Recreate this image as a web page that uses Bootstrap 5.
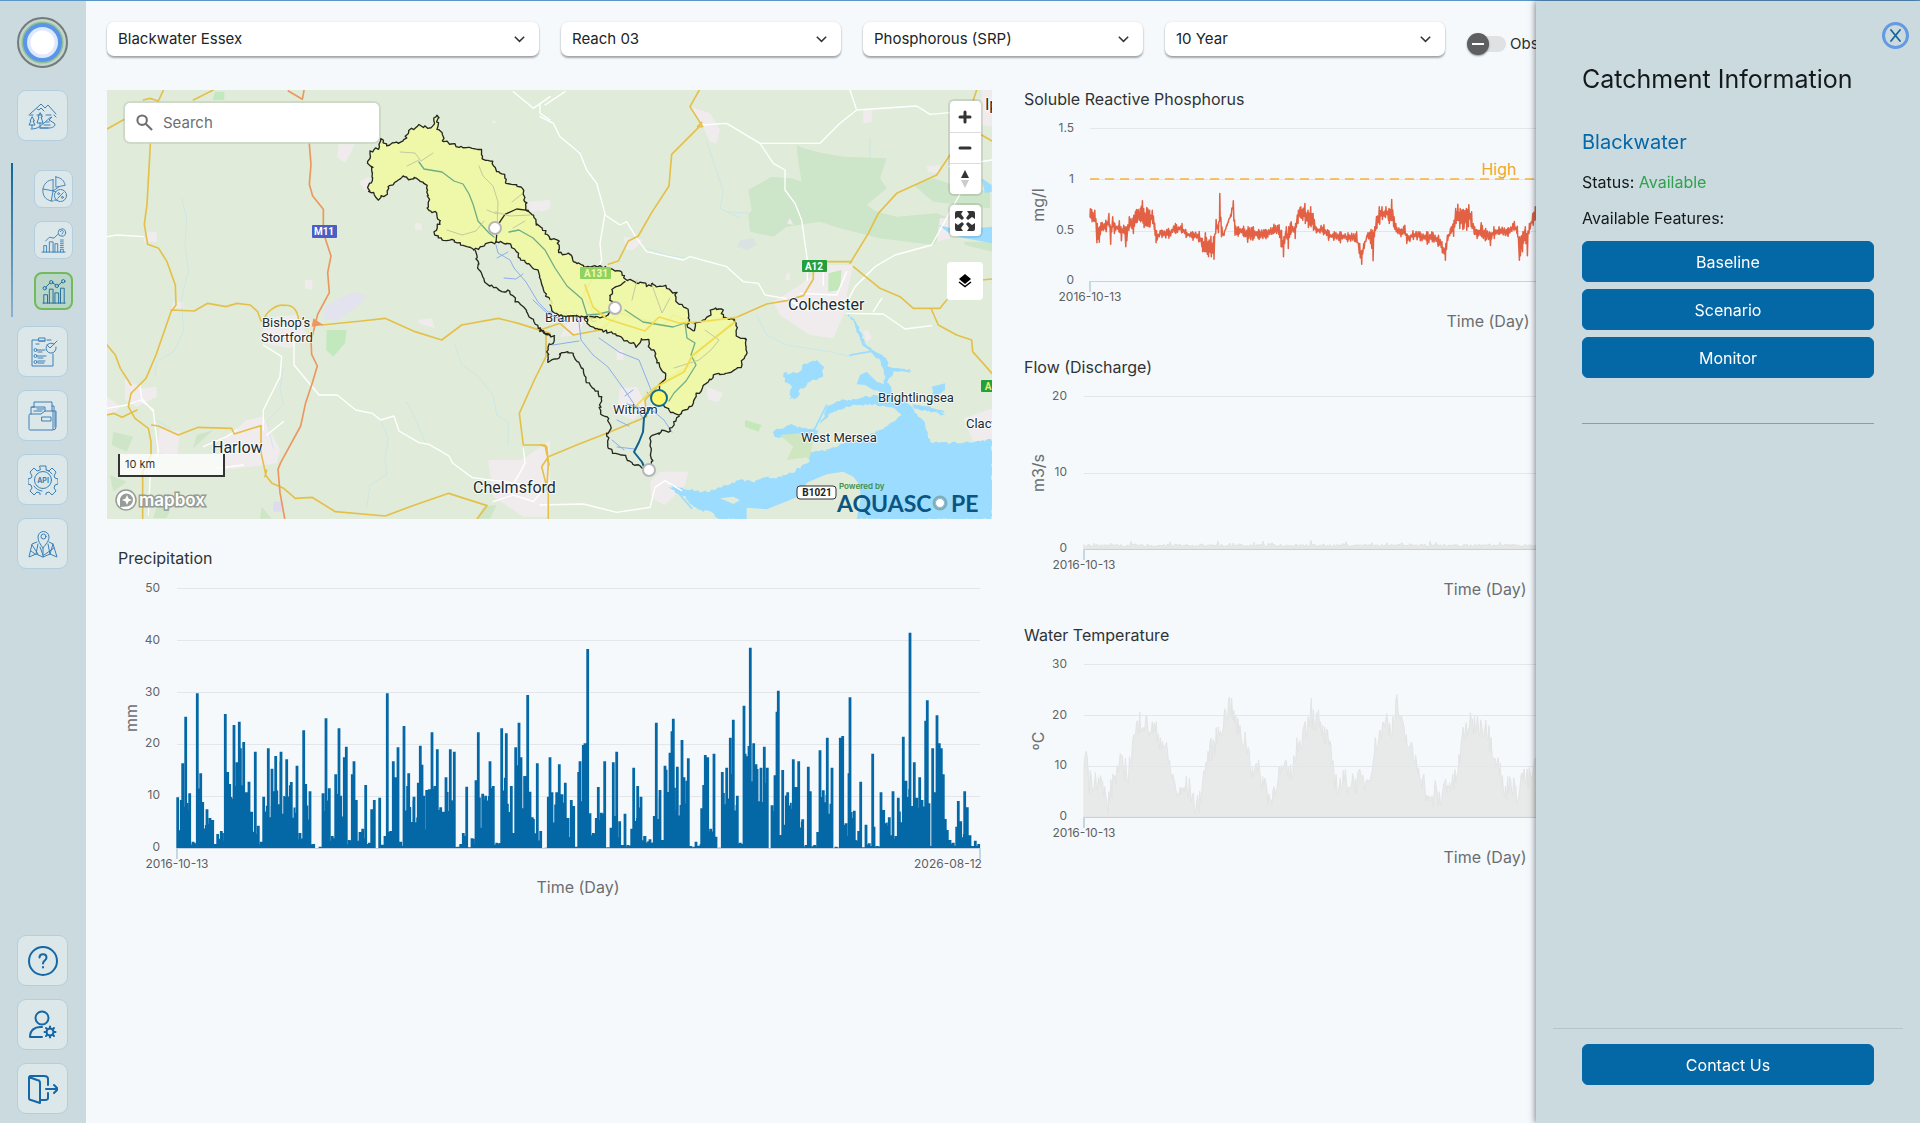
<!DOCTYPE html>
<html lang="en">
<head>
<meta charset="utf-8">
<meta name="viewport" content="width=device-width, initial-scale=1">
<title>Aquascope – Catchment dashboard</title>
<link href="https://cdn.jsdelivr.net/npm/bootstrap@5.3.0/dist/css/bootstrap.min.css" rel="stylesheet">
<style>
:root{--ink:#2b2e30;--brand:#0568a6;--panel:#cbdadf;--page:#f5f9fc;--tile:#dce7ea}
body{font-family:Inter,"Open Sans",sans-serif;font-size:15px;background:var(--page);color:var(--ink);border-top:1px solid #5b96c6}
.shell{min-height:calc(100vh - 1px)}
.side-nav{width:86px;flex:none;background:var(--panel);padding:16px 1px 9px 0}
.brand-mark{width:51px;height:51px;margin-bottom:22px}
.tile{width:51px;height:51px;background:var(--tile);border:1px solid #b3cee1;border-radius:9px;color:#3c7fb4;padding:0;display:flex;align-items:center;justify-content:center}
.tile svg{width:30px;height:30px;fill:none;stroke:currentColor;stroke-width:1;stroke-linejoin:round;stroke-linecap:round}
.tile-strong{color:#1667a5}
.tile-strong svg{stroke-width:2}
.sub-nav{position:relative;width:100%;padding:7px 12px 7px 34px;margin:22px 0 9px;gap:13px}
.sub-nav::before{content:"";position:absolute;left:11px;top:0;bottom:0;width:2px;background:linear-gradient(#0f6695,#8db2cb)}
.sub-nav .tile{width:39px;height:38px;border-radius:8px}
.sub-nav .tile svg{width:26px;height:26px}
.sub-nav .tile.active{background:#b9d6c9;border:2px solid #73b95f;color:#1c6a9c}
.nav-stack{gap:13px}
.workspace{min-width:0;overflow:hidden;padding:21px 11px 20px 21px}
.filters{gap:22px;margin-bottom:33px}
.filters .form-select{height:34px;margin-bottom:1px;border:0;border-radius:7px;padding:0 36px 0 11px;font-size:15px;color:#202426;box-shadow:0 2px 2px rgba(40,50,60,.4),0 0 2px rgba(40,50,60,.12);background-color:#fff;background-image:url("data:image/svg+xml,%3Csvg xmlns='http://www.w3.org/2000/svg' viewBox='0 0 16 16'%3E%3Cpath fill='none' stroke='%23333' stroke-width='1.6' d='M3 5l5 5 5-5'/%3E%3C/svg%3E");background-size:15px 15px;background-position:right 12px center;flex:none}
.filters .pick-short{width:280px}
.filters .pick-long{width:432px}
.observed{gap:4px;padding-top:9px}
.observed input{appearance:none;position:relative;width:39px;height:22px;margin:0;flex:none}
.observed input::before{content:"";position:absolute;left:10px;top:3px;width:29px;height:16px;border-radius:8px;background:#dfe1e2}
.observed input::after{content:"";position:absolute;left:0;top:0;width:22px;height:22px;border-radius:50%;background:linear-gradient(#fff,#fff) center/12px 2px no-repeat #5d5f60;box-shadow:0 1px 2px rgba(0,0,0,.4)}
.boards{gap:32px}
.boards>*{flex:1 1 0;min-width:0}
.chart-title{font-size:16px;line-height:18px;padding-bottom:2px;font-weight:400;margin:0;color:#303335}
.rain-title{margin:30px 0 0 11px}
.map-box{position:relative;overflow:hidden}
.map-box>svg,.plot{display:block;width:100%;height:auto}
.map-search{position:absolute;left:18px;top:13px;width:254px;height:39px;background:#fff;border-radius:5px;box-shadow:0 0 0 2px rgba(0,0,0,.08);padding:0 11px;gap:8px}
.map-search svg{width:17px;height:17px;flex:none}
.map-search input{border:0;outline:0;width:100%;font-size:15px;line-height:20px;background:none}
.map-search input::placeholder{color:#6b6f72;opacity:1}
.map-tools{position:absolute;right:9px;top:11px;gap:11px}
.tool-set{background:#fff;border-radius:4px;box-shadow:0 0 0 2px rgba(0,0,0,.1);overflow:hidden}
.tool-set button{display:block;width:31px;height:31px;border:0;background:none;padding:0}
.tool-set button+button{border-top:1px solid #ddd}
.tool-set svg,.layers svg{display:block;margin:auto}
.layers{width:36px;height:38px;border:0;border-radius:4px;background:#fff;margin-top:15px;padding:0}
.town{font-family:Roboto,sans-serif;fill:#222b2f;stroke:#fff;stroke-width:2;stroke-opacity:.8;paint-order:stroke;stroke-linejoin:round}
.town-lg{font-size:16px}.town-sm{font-size:13px}
.shield{font-family:Roboto,sans-serif;font-size:10px;font-weight:700;text-anchor:middle}
.road-y{stroke:#e4c04a;stroke-width:5}.road-w{stroke:#fff;stroke-width:4}.road-o{stroke:#eb9860;stroke-width:5}
.axis-num{font-size:12px;fill:#626567;text-anchor:end}
.axis-date{font-size:12px;fill:#5c6062;text-anchor:middle}
.axis-name{font-size:16px;fill:#6b6e70;text-anchor:middle}
.grid-line{stroke:#e4e7e9;fill:none}
.base-line{stroke:#c5d2e4;fill:none}
.tick-end{stroke:#c5d7e0;stroke-width:2;fill:none}
.info-panel.offcanvas{--bs-offcanvas-width:384px;top:1px;background:var(--panel);border:0;box-shadow:-1px 0 6px rgba(30,40,50,.55);color:#14191c}
.panel-main{padding:63px 46px 0}
.panel-title{font-size:25px;line-height:30px;font-weight:400;margin:0 0 35px}
.panel-name{font-size:20px;line-height:26px;font-weight:400;color:var(--brand);margin:0 0 17px}
.panel-text{font-size:16px;line-height:20px;margin:0 0 16px}
.ok-word{color:#2fa24c}
.feature-list{gap:7px;padding-top:13px}
.btn-brand{--bs-btn-bg:#0568a6;--bs-btn-color:#fff;--bs-btn-border-color:#0568a6;--bs-btn-hover-bg:#04588d;--bs-btn-hover-color:#fff;height:41px;font-size:16px;font-weight:400;padding:0;border-radius:6px;width:100%}
.panel-rule{margin:45px 0 0;border-top:1px solid #7f8e94;opacity:.8}
.panel-foot{margin:0 17px;padding:15px 29px 38px;border-top:1px solid #b5c4ca}
.close-ring{position:absolute;top:21px;right:11px;width:27px;height:27px;border:3px solid #6599e2;border-radius:50%;background:none;padding:0;display:flex;align-items:center;justify-content:center}
</style>
</head>
<body>
<div class="shell d-flex">
<nav class="side-nav d-flex flex-column align-items-center" aria-label="Main">
  <svg class="brand-mark" viewBox="0 0 51 51" aria-hidden="true"><circle cx="25.500" cy="25.500" r="24.500" fill="#c3d6cb" stroke="#737b7d" stroke-width="2"/><circle cx="25.500" cy="25.500" r="21" fill="#91bf98"/><circle cx="25.500" cy="25.500" r="19.500" fill="#5b95e8"/><circle cx="25.500" cy="25.500" r="15.500" fill="#dfe9fc"/><circle cx="25.500" cy="25.500" r="12" fill="#fff"/></svg>
  <button class="tile" type="button" aria-label="Catchment"><svg viewBox="0 0 30 30"><path d="M2 13L13 3l4 4 3-3 8 9M1 14h4m4 0h5m4 0h5M9 8l2 1 2-2 3 3M4 24v3M12 22v5M4 16l-2 4h1l-2 4h6l-2-4h1zM12 12l-2 4h1l-2 6h6l-2-6h1zM3 28c8 0 10-4 13-6s4-5 8-6l-3 3 5 3c3 3-2 5-5 5h-8M18 21h3M16 24h6M26 14l2 2M12 27h8"/></svg></button>
  <div class="sub-nav d-flex flex-column">
    <button class="tile" type="button" aria-label="Baseline"><svg viewBox="0 0 28 28"><path d="M13 4v12L2 14M13 4C7 4 2 9 2 16s5 11 11 11M13 16l-2 11M13 16l6-4M16 1v11l10-2c-1-5-4-8-10-9zM14 26h4M13 16l3 1"/><circle cx="21" cy="21" r="6.500"/><path d="M18 24l6-6"/><circle cx="19" cy="19" r="1"/><circle cx="23" cy="23" r="1"/></svg></button>
    <button class="tile" type="button" aria-label="Scenario"><svg viewBox="0 0 28 28"><path d="M1 27h25M3 27v-7h3v7M9 27V16h4v11M15 27v-9h3v9M21 27v-3h3v3M21 22h3M21 20h3M21 18h3M21 16h3M21 14h3M5 15l4-4 5 1 4-4"/><circle cx="22.500" cy="6" r="4"/><path d="M21 5c0-2 3-2 3 0 0 1-1 1-1 2M22.500 8.500v0"/></svg></button>
    <button class="tile active" type="button" aria-label="Monitor"><svg viewBox="0 0 28 28"><path d="M2 27h24M3 27V18h4v9M9 27V12h4v15M15 27V16h4v11M21 27V11h4v16M5.500 9.500l4-4M12 5l4 2.500M18.500 8l4-3.500"/><circle cx="4" cy="11" r="1.800"/><circle cx="11" cy="4.500" r="1.800"/><circle cx="17" cy="8.500" r="1.800"/><circle cx="24" cy="3.500" r="1.800"/></svg></button>
  </div>
  <div class="nav-stack d-flex flex-column">
    <button class="tile" type="button" aria-label="Tasks"><svg viewBox="0 0 30 30"><path d="M10 3H4v26h21V17M19 3h4M11 1h6v3h-6zM11 4h6M8 7h3M10 13h7M10 15h4M10 19h8M10 21h5M10 24h7M10 26h6M26 7a5 5 0 1 0 2 3M19 8l3 3 7-7"/><circle cx="7.500" cy="13" r="1.500"/><circle cx="7.500" cy="19" r="1.500"/><circle cx="7.500" cy="25" r="1.500"/></svg></button>
    <button class="tile" type="button" aria-label="Files"><svg viewBox="0 0 30 30"><path d="M1 14q0-1 1-1h11l4-3h8v18q0 1-1 1H2q-1 0-1-1zM3 13V6h3M6 6V1h18v9M4 6h13v4M9 8h7M6 10h8M24 5h2v5M25 10h3v16q0 3-3 3M27 11v15M14 16h9v4h-9z"/></svg></button>
    <button class="tile" type="button" aria-label="API"><svg viewBox="0 0 30 30"><path d="M12 1h6v4l3 1 3-3 4 4-2 4 1 2 3 1v5l-3 1-1 3 2 3-4 4-3-3-3 1v3h-6v-3l-3-1-3 3-4-4 2-3-1-3-3-1v-5l3-1 1-2-2-4 4-4 3 3 3-1z"/><circle cx="15" cy="15" r="8.500"/><path d="M6 21a11 11 0 0 0 8 5M24 9a11 11 0 0 0-5-4"/><text x="15" y="18" font-size="7" font-weight="700" text-anchor="middle" fill="#3c7fb4" stroke="none">API</text></svg></button>
    <button class="tile" type="button" aria-label="Map"><svg viewBox="0 0 30 30"><path d="M15 19c-3-4-5-7-5-11a5.500 5.500 0 0 1 11 0c0 4-3 7-6 11zM9 13l-5 2-3 13 7-3 7 3 7-3 7 3-4-13-4-2M8 25l2-10M22 25l-2-10M15 28v-8M4 16l6 9M3 22l4 3M25 15l-3 10M16 26l10-7M12 18l3 8"/><circle cx="15.500" cy="7.500" r="2.500"/></svg></button>
  </div>
  <div class="nav-stack d-flex flex-column mt-auto">
    <button class="tile tile-strong" type="button" aria-label="Help"><svg viewBox="0 0 30 30"><circle cx="15" cy="15" r="14"/><path d="M11.500 11.500c0-4.500 7-4.500 7 0 0 3-3.500 3-3.500 6M15 21v.5"/></svg></button>
    <button class="tile tile-strong" type="button" aria-label="Account settings"><svg viewBox="0 0 30 30"><circle cx="14" cy="8" r="6.500"/><path d="M14 27H2c0-7 5-10 10-10h2"/><circle cx="22" cy="22" r="3.500"/><path d="M22 16.500v2M22 25.500v2M16.500 22h2M25.500 22h2M18 18l1.500 1.500M24.500 24.500L26 26M18 26l1.500-1.500M24.500 19.500L26 18"/></svg></button>
    <button class="tile tile-strong" type="button" aria-label="Log out"><svg viewBox="0 0 30 30"><path d="M1 3l8 3c2 0 3 1 3 3v20l-9-3c-1 0-2-1-2-2zM2 2h14c3 0 4 1 4 3v6M20 19v5c0 2-1 2-3 2h-5M18 15h12M26 11l4 4-4 4"/></svg></button>
  </div>
</nav>

<main class="workspace flex-grow-1">
  <form class="filters d-flex">
    <select class="form-select pick-long" aria-label="Catchment"><option>Blackwater Essex</option></select>
    <select class="form-select pick-short" aria-label="Reach"><option>Reach 03</option></select>
    <select class="form-select pick-short" aria-label="Parameter"><option>Phosphorous (SRP)</option></select>
    <select class="form-select pick-short" aria-label="Period"><option>10 Year</option></select>
    <label class="observed d-flex align-items-center"><input type="checkbox" role="switch">Observed</label>
  </form>

  <div class="boards d-flex">
    <section>
      <div class="map-box">
        <svg viewBox="0 0 885 429" role="img" aria-label="Map of the Blackwater catchment">
          <rect width="885" height="429" fill="#e0ecd9"/>
          <g stroke-linejoin="round" stroke-linecap="round">
          <!-- western sheet: towns, woods, roads -->
          <g transform="scale(.333333) translate(-21 -15)" fill="none">
            <g fill="#f0ecee"><path d="M715 178h50l-30 55-22-15zM778 290l30-15v35l-15 5zM140 440h30v30h-40zM220 650h30v20h-35zM615 585h22v30l-22-5zM955 705l40-5 10 30-50-15zM1280 350l70-5v25l-60 10zM490 700l100-10 30 60-50 40-80-15zM75 880l50 30 45-5v30l-60 30-35-20zM180 1030l60 10-10 80-60-20zM440 1005l50-10 50 100-10 40-160 20-10-80zM21 935l40 30-20 20h-20zM1165 1125h100l85-60v230h-80l-90-60zM945 415h20v20h-20zM1175 105l15 5-10 8z"/></g>
            <path d="M670 665l90-45 38 10-15 25-70 52-40-3z" fill="#e3e3ef"/>
            <path d="M680 735h60l-5 40-35 40-22-20zM345 20h28v25h-35z" fill="#c2e9bd"/>
            <path d="M1150 1265l40-5-20 41h-40zM40 1040l60 15-20 45-45-20zM180 1230l40 20-20 50h-40zM290 1050l50-15-60 55zM30 1170l50 20-40 30zM485 1265l30 36h-35z" fill="#cfe5c8"/>
            <path d="M520 1250h30v30h-30z" fill="#dcdcee"/>
            <g stroke="#c3e4ea" stroke-width="2"><path d="M245 340l15 60-5 80 10 80-20 80 5 100-30 60-50 30-5 40M840 1000l25 60-10 60 5 50-50 30-10 70M920 950l25 50 30 70M1065 780l20 60 45 30 50 60 10 60 35 20v70M160 1000l50 30M550 850l-10 60 10 50-50 50 20 80"/></g>
            <path class="road-w" d="M21 455l30-5 80 5M490 780l55 35-5 60-50 100v60M582 770v70l75 90h55l55 45 50 10 25 20 40-12 15 45 60 35 30 5 60 35 10 20 60 45 150 20M120 900l5 40 35 40 15 120-25 80-5 110M21 970l60-10 40-15 40 30M1240 20l60 50 50-35M1320 60v25l30 20M350 1150l80-10M500 1050l50-40M310 1085l70-30 30-20M1270 1090l5 45-50 90M1180 1250l60-20 60 20 50-60"/>
            <path class="road-y" d="M21 132l50-28M130 45l20-5 25 8 15-32M280 45l60-30M151 178l-10 180-8 60 10 60 33 12 25 40 25 70 2 60-15 20-45 130-30 70-45 45-8 40 20 35 40 30 8 40v40l-25 50v150l-15 31M21 990l20-5 25 12 45-22M213 675l70 3 40-23 55 10 33-10 40 5 22 20 10 28 10-2c0-25 40-50 60-45 30-3 40 20 43 45M665 720l120-12 70-8 90 40 80 25 60-45 110-20 60 15 95 30M21 780l25 30 15 40 32 50M155 1020l20 3 60 27 60-23 100 3 8 17 80-25v80l15 70 18 23 35 15 35 30 50-3 70 43 150 13 80-30 110-38 115 37-30 40M1338 755v60l-35 70-45 100 12 95 65 0 12 60M495 1175l5-20"/>
            <path class="road-o" d="M565 18l42 25 5-27M628 178l5 60-5 60 10 35 32 40v70l10 30 13 40-10 50 5 60-35 65-20 80 2 40 17 35-15 50-20 60-15 70-60 110-8 20 6 70 14 77"/>
            <path d="M640 700l30 20-35 5z" fill="#eb9860"/>
          </g>
          <!-- eastern sheet: forest, estuary, roads -->
          <g transform="scale(.333333) translate(1299 -15)" fill="none">
            <path d="M790 190l60 15 60 10 130 5-20 60 20 30-60 50 30 20 60 15 120-10 50 20-20 30-40 45-160-20-120-30-60-20-100 15-40 30-70-15-5-50 10-15-10-60 70-40 60 5 30 10-10-60-5-50zM1120 300l60-20 60 20 110 20v50l-170-20zM1270 470h86v30l-80-20z" fill="#cde5c8"/>
            <g fill="#f0ecee"><path d="M450 65l60 20 30 50-10 40-20-5-20-45zM970 75h25v35l-25 5zM0 350l35 5-15 20-20 5zM250 455l60 10-30 30h-20zM740 565h10v20h-15zM700 650l80-50 50-40 40-20h70l-20 90 10 30-20 30-30 70-70-10-90-60zM750 400l10 20-20-5zM500 905l50 20-15 25-30-5zM240 910l50-5 30 60-40 40-50-20zM90 700l40 5-10 45-60 5zM330 1190l30-30 85 0-10 40-60 60-40-20zM1325 15h30v110l-30-5zM1160 245l40-5-5 25-30-5zM1200 400h30v60l-40 10zM0 1100l20 10v110l-20-5zM1270 1000l90-30v90l-60 10zM970 740l15-5 10 25-15 10zM230 795h20v30h-20z"/></g>
            <path d="M865 565l40-10-5 60-35 5zM615 1005l50 15-10 20-40-15z" fill="#c5e8bb"/>
            <path d="M600 465l40-5 10 20-30 15-30-10z" fill="#d9e4e2"/>
            <g stroke="#bfe4ee" stroke-width="2"><path d="M500 170l30 90 20 60-10 50 60 30M560 380l70 5M650 690l30 60 60 30 130 20 60 15 40-15M990 160v60M320 490l60 20 60 10M100 190l20 10"/></g>
            <path class="ridge" fill="#9bdcff" d="M385 1205l65 7 50 10 60-22 40-15 40 5 50-15 20 5 50-20 50-32-20-23 70-10 100-35 90-40 35-30-35-25-50-5h-60l-70 25-15 45-20 5 25-65 30-20 70-12 55-8 15-30 5-20-10-50-35-30-25-30-20-50-25-30 6-4 29 39 25 60 55 30 15 35 65 5-55 5-15 30 15 40 50 30 70 10 35 20-100-20 35 40 20 60 60 5 126-10v238H540l-30-23-40-5-30-35z"/>
            <path class="ridge" fill="#9bdcff" d="M730 865l50-5 10-20 40-15 20 20v30l-40 15-30 25-10 25-20 5 5-45-20-10z"/>
            <path class="ridge" fill="#9bdcff" d="M700 1040l50-20 80 15 30 15-20 20-60-10-80-5z"/>
            <path fill="#9bdcff" d="M960 870l20-10 30 30 30 10-10 20-30-5-25-15-25-2zM1195 420l60 15 101-10v50l-80-15-40-10zM1325 280l30 20v20l-20 5zM1175 905l40-10v20l-20 15-25 35-10-5 20-40z"/>
            <path fill="#e0ecd9" d="M620 1303v-35l60 5 100-40 20-40 60-25 50-8 30 15 15 20 8 40-13 68zM845 1010l50-35 80-10 70 5 40 20-110 35-100 40-50-5zM540 1240l40-5 20 10-20 12z"/>
            <path fill="#cfe6c1" d="M720 1050l60-5 40 20-10 50-70 10 20-40z"/>
            <path stroke="#9bdcff" stroke-width="5" d="M945 710l25 70 60 40M860 960l-40 80M990 800l-60 10M1050 850l60 10M395 1200l60 70M1120 960l90 20"/>
            <path class="road-w" d="M0 95l40 20 20 40 60 50 20 50 30 40 25 90-15 90 5 50-20 50M195 390l45 30 20-10 30 50 30 40 110 25 20-10 110 30 50 45 45 5 20 35 60 10 70 35M15 60l60-40M485 120l75-5 100 60 40 60 35 20v60l30 40 20 50 17 120v60M660 175l180 0 60-60 50-40-20-60M950 75l180-12 40 25 60-5M1356 225l-130 20M1275 300l-100 180-110 30-60 35-60 60-30 60M920 685l110 2 65 45 80-10M780 625l110 5 30-70M1000 680l25-40M0 1260l130-3 100 25 100-15 15-60 30-20 50 30M850 540v60"/>
            <path class="road-y" d="M478 15l-28 50 38 60h-15l12-13M475 128l-80 80-8 95-52 80-40 70-30 15-30 60-30 10M135 545l20 40-25 40 30 60M0 735l60-20 40 35 80-15 60-50 130 35 30-30 60 25 80-10 50-8 90-40 60-10 50-15 30-50v-30M845 530h90M930 535l55-90 30-60 55-60 120-55 40-60M940 545l80 65 60 25 40 35h80l20-25M1175 675l20 45 55 30 45 15 3 35 58 65M1325 585l31-3M1325 150l31 18M1310 15l-10 30M585 705l-110 95-20 40-90 50-50 55 5 50-120 50-90 35-85 35-20 30 20 80v80M0 1080l20 5 5 50-5 80"/>
          </g>
          <text class="town town-sm" x="438" y="232">Braintree</text>
          <text class="town town-sm" x="506" y="324">Witham</text>
          <!-- catchment -->
          <g fill="none" stroke="#8caeea" stroke-width="1"><path d="M389 155l2 8 12 7 4 8 12 14 12 20 10 10M390 168l11-6M397 188l12 1 7-5M441 222h25l6 10 2 18 12 15 15 12 18 25 8 12 10 16M426 210l15 14 20 8M492 248l20 14 20 8 8 20 6 15M446 255l26-4M510 330l12 6M510 357l18 2M520 314l14 4M540 302l10 14M526 300l-8 6M545 320l12 10 8 12M505 350l12 10"/></g>
          <path class="ridge" transform="scale(.333333) translate(-21 -15)" fill="#f0f8a0" fill-opacity=".88" stroke="#25281f" stroke-width="4" d="M1350 462l-15-22-10-15-15-5-5-22-20-20-7-8 4-20-10-5v-27l-17-13-23-7-17-8v-20l-25-8-2-17-10-5-3-12-25-6-8-27-17-5-10 3-15-8-32 0-8-10-10 3-20-13v-17l-20-20 5-36-12 3-5 30-18 2-20-5-15 8-20 8-13 34-27 3-25 5-15-18-10 28-25 10-5 35 13 10-3 45-10 10 1 22 15 4 14 16 25-14 5-26 20-10 15-7 12-15 18 15 20-7 10 12 18 10 7 40v38l20 2 17 30-14 15-3 20 25 25 30-5 13 10 17 3 35 17 25-13 38-12 20 3 17 2 27 25 3 20 25 10 20 18 15 10 8 42 17 30 15 25"/>
          <g transform="scale(.333333) translate(1299 -15)" fill="none" stroke="#25281f" stroke-width="4">
            <path class="ridge" fill="#f0f8a0" fill-opacity=".88" d="M30 462l25 3v35l15 8 20 0 15 27 15 2 15 8 45-3 35 11 33 12 7 20 20-3 10 12 15-2 30 13 5-15 13 15 12 0 15-7 15 20 18 7 2 30 15 3 15 12 10 25-8 30 18 13 10-26 20-7 20-10 5-25h30l5 25 35 10 7 20v30l28 5-2 40-18 50-20 10-15 5-40 5-25 20-15 22-20 23-10 30-15 5-20 20-20-5-25-20-20-25v-30l20-25-3-25-10-10-12-20-5-30-15-10-5-28h-20l-13 23-20-13-17-4-30-23-45-10-20-7-15-8-5-28-35 3-45-3-20-12-10-20"/>
            <path class="ridge" d="M255 590l-35 20-10 30 12 28-17 22-20 8-35-3"/>
            <path class="ridge" d="M0 730l15 18 30 7-2 20-18 5-5 52 15-10 20 3 5-20 35-5 15 30 10 10 10 20 10 30 25 25 20 20-5 40 10 15 15 10 7 30-10 20 3 35 15 20 35 7 10 12 15 11 25 15 22 5 11-25-8-30 2-50 28-5 5-10 20 5 30-45"/>
          </g>
          <g transform="scale(.333333) translate(-21 -15)" fill="none" stroke="#25281f" stroke-width="4">
            <path d="M1190 430l10-20 15-22 35-16 35 4M1190 450l-2 22"/>
            <path class="ridge" d="M1125 495l5 25 10 20-8 2 18 33 5 15 10 10 15 5 15 10 20 5 15-5 5 15 15 20 10 5 25 35 15 15 20 30 30 17"/>
          </g>
          <g fill="none" stroke="#6fae84" stroke-width="1.300"><path d="M312 72l5 7 18 3 12 9 9 3 6 10 4 10 5 17 11 12 5 4M402 142l10-2 14 8 12 12 10 18 12 18 15 13 5 16 12-1 20-5M518 220l18 12 30 5 12-4 2 15 8 5-4 12 5 10-10 16-12 12-5 8"/></g>
          <g fill="none" stroke="#bfc3a0" stroke-width=".9"><path d="M293 62l15 1 6 8 12-8M300 76l12-6M372 76l4 10 10 10 5 16-1 28M388 122l15 4 20-1M380 120l10 4M340 140l15 5 14-4 8-10M405 112l10-8M406 138l12-7M530 190l-5 20M545 195l10 28 8-15M598 240l14 10-8 10-12 10-25 8"/></g>
          <g fill="none" stroke="#f0dc50" stroke-width="1.700"><path d="M478 195l8 22 14 12 38 12 14-14 20 6 28-2 30-4M628 232l-28 22-15 12-8 16-30 16-18 18"/></g>
          <path d="M543 318l-6 10-1 14-4 10-5 10 8 10 3 7" fill="none" stroke="#10628e" stroke-width="2"/>
          </g>
          <rect x="473" y="177" width="31" height="12" rx="1" fill="#8fd35f"/>
          <text class="shield" x="489" y="187" fill="#f3f9b0">A131</text>
          <g fill="#fff" stroke="#b4b5b8" stroke-width="2"><circle cx="388" cy="138" r="6"/><circle cx="508" cy="218" r="6"/><circle cx="542" cy="380" r="6"/></g>
          <circle cx="552" cy="308" r="8" fill="#fdf86e" stroke="#0f6d90" stroke-width="2"/>
          <!-- labels -->
          <g class="town town-sm"><text x="155" y="237">Bishop’s</text><text x="154" y="252">Stortford</text><text x="694" y="352">West Mersea</text><text x="771" y="312">Brightlingsea</text><text x="859" y="338">Clact</text></g>
          <g class="town town-lg"><text x="105" y="363">Harlow</text><text x="366" y="403">Chelmsford</text><text x="681" y="220">Colchester</text><text x="878" y="20">Ip</text></g>
          <rect x="205" y="135" width="25" height="13" rx="1" fill="#4a5ec4"/><text class="shield" x="217" y="145" fill="#fff">M11</text>
          <rect x="695" y="170" width="25" height="12" rx="1" fill="#239f3e"/><text class="shield" x="707" y="180" fill="#fff">A12</text>
          <rect x="874" y="290" width="25" height="12" rx="1" fill="#239f3e"/><text class="shield" x="881" y="300" fill="#e9f06c">A</text>
          <rect x="690" y="396" width="39" height="13" rx="3" fill="#fff" stroke="#333"/><text class="shield" x="710" y="406" fill="#222">B1021</text>
          <rect x="12" y="364" width="105" height="22" fill="#fff" fill-opacity=".75"/><path d="M12 364v22h105v-22" fill="none" stroke="#333" stroke-width="2"/><text x="18" y="378" font-size="11" fill="#333">10 km</text>
          <g stroke="#969c96" fill="#fff"><circle cx="19" cy="410" r="10" stroke-width="1.500"/><path d="M13 417V410a6.500 6.500 0 1 1 6.500 6.500z" fill="#969c96" stroke="none"/><path d="M20 405l1.500 3.500L25 410l-3.500 1.500L20 415l-1.500-3.500L15 410l3.500-1.500z" stroke="none"/><text x="32" y="416" font-size="17" font-weight="600" stroke-width="3" paint-order="stroke">mapbox</text></g>
          <text x="732" y="399" font-size="8" font-weight="600" fill="#3f8d49">Powered by</text>
          <g font-family="Lato, sans-serif" font-size="23" font-weight="700" fill="#0c5580"><text x="730" y="422">AQUASC</text><text x="844" y="422">PE</text></g>
          <circle cx="833" cy="413" r="6" fill="#fff" stroke="#7fb1b4" stroke-width="3"/><circle cx="833" cy="413" r="4.500" fill="#fff" stroke="#8fb4f0"/>
        </svg>
        <label class="map-search d-flex align-items-center"><svg viewBox="0 0 18 18" fill="none" stroke="#6d6f71" stroke-width="2.200" aria-hidden="true"><circle cx="6.500" cy="6.500" r="5"/><path d="M10 10l7 7"/></svg><input type="text" placeholder="Search" aria-label="Search"></label>
        <div class="map-tools d-flex flex-column align-items-center">
          <div class="tool-set">
            <button type="button" aria-label="Zoom in"><svg width="14" height="14" stroke="#333" stroke-width="3" stroke-linecap="round"><path d="M2 7h10M7 2v10"/></svg></button>
            <button type="button" aria-label="Zoom out"><svg width="14" height="14" stroke="#333" stroke-width="3" stroke-linecap="round"><path d="M2 7h10"/></svg></button>
            <button type="button" aria-label="Reset north"><svg width="10" height="20"><path d="M1 9h8L5 1z" fill="#333"/><path d="M1 11h8l-4 8z" fill="#ccc"/></svg></button>
          </div>
          <div class="tool-set"><button type="button" aria-label="Full screen"><svg width="22" height="22" viewBox="0 0 22 22" fill="#333"><path id="fsArrow" d="M1 9V3q0-2 2-2h6L7 4l3 4-2 2-4-3z"/><use href="#fsArrow" transform="rotate(90 11 11)"/><use href="#fsArrow" transform="rotate(180 11 11)"/><use href="#fsArrow" transform="rotate(270 11 11)"/></svg></button></div>
          <button class="layers" type="button" aria-label="Layers"><svg width="14" height="14" viewBox="0 0 14 14"><path d="M7 0l6 5-6 5-6-5z"/><path d="M1 8l6 4.500L13 8" fill="none" stroke="#000" stroke-width="1.500"/></svg></button>
        </div>
      </div>
      <h2 class="chart-title rain-title">Precipitation</h2>
      <svg class="plot" viewBox="0 0 885 330" role="img" aria-label="Precipitation chart">
        <path class="grid-line" d="M70 19.500H873M70 71.500H873M70 123.500H873M70 175.500H873M70 227.500H873"/>
        <path id="rain" fill="#0568a6"/>
        <path class="base-line" d="M70 279.500H873"/><path class="tick-end" d="M70 279v11M873 279v11"/>
        <g class="axis-num"><text x="53" y="23">50</text><text x="53" y="75">40</text><text x="53" y="127">30</text><text x="53" y="178">20</text><text x="53" y="230">10</text><text x="53" y="282">0</text></g>
        <g class="axis-date"><text x="70" y="299">2016-10-13</text><text x="841" y="299">2026-08-12</text></g>
        <text class="axis-name" x="471" y="324">Time (Day)</text>
        <text class="axis-name" transform="translate(30 149) rotate(-90)">mm</text>
      </svg>
    </section>

    <section>
      <h2 class="chart-title">Soluble Reactive Phosphorus</h2>
      <svg class="plot" viewBox="0 0 885 248" role="img" aria-label="Soluble reactive phosphorus chart">
        <path class="grid-line" d="M66 18.500H864M66 69.500H864M66 121.500H864"/>
        <path class="base-line" d="M66 171.500H864"/><path class="tick-end" d="M66 171v11"/>
        <path d="M66 69H864" fill="none" stroke="#f3b23f" stroke-width="1.500" stroke-dasharray="9 6"/>
        <path id="srp" fill="none" stroke="#e26144" stroke-width="1.500" stroke-linejoin="round"/>
        <g class="axis-num"><text x="50" y="22">1.5</text><text x="50" y="73">1</text><text x="50" y="124">0.5</text><text x="50" y="174">0</text></g>
        <text class="axis-date" x="66" y="191">2016-10-13</text>
        <text class="axis-name" x="464" y="217">Time (Day)</text>
        <text class="axis-name" transform="translate(20 95) rotate(-90)">mg/l</text>
        <text x="475" y="65" font-size="16" text-anchor="middle" fill="#f0a62d">High</text>
      </svg>
      <h2 class="chart-title">Flow (Discharge)</h2>
      <svg class="plot" viewBox="0 0 885 248" role="img" aria-label="Flow chart">
        <path class="grid-line" d="M60 18.500H862M60 95.500H862"/>
        <path id="flow" fill="#e6e8e8" stroke="#e2e3e3"/>
        <path class="base-line" d="M60 171.500H862"/><path class="tick-end" d="M60 171v11"/>
        <g class="axis-num"><text x="43" y="22">20</text><text x="43" y="98">10</text><text x="43" y="174">0</text></g>
        <text class="axis-date" x="60" y="191">2016-10-13</text>
        <text class="axis-name" x="461" y="217">Time (Day)</text>
        <text class="axis-name" transform="translate(20 95) rotate(-90)">m3/s</text>
      </svg>
      <h2 class="chart-title">Water Temperature</h2>
      <svg class="plot" viewBox="0 0 885 248" role="img" aria-label="Water temperature chart">
        <path id="temp" fill="#e8eae9" stroke="#e3e4e4"/>
        <path class="grid-line" d="M60 18.500H862M60 69.500H862M60 120.500H862"/>
        <path class="base-line" d="M60 171.500H862"/><path class="tick-end" d="M60 171v11"/>
        <g class="axis-num"><text x="43" y="22">30</text><text x="43" y="73">20</text><text x="43" y="123">10</text><text x="43" y="174">0</text></g>
        <text class="axis-date" x="60" y="191">2016-10-13</text>
        <text class="axis-name" x="461" y="217">Time (Day)</text>
        <text class="axis-name" transform="translate(20 95) rotate(-90)">ºC</text>
      </svg>
    </section>
  </div>
</main>
</div>

<aside class="info-panel offcanvas offcanvas-end show" data-bs-backdrop="false" data-bs-scroll="true" tabindex="-1" aria-labelledby="panelTitle">
  <button class="close-ring" type="button" aria-label="Close"><svg width="13" height="13" stroke="#17659d" stroke-width="1.800" stroke-linecap="round"><path d="M2 1l9 11M11 1L2 12"/></svg></button>
  <div class="panel-main flex-grow-1">
    <h1 class="panel-title" id="panelTitle">Catchment Information</h1>
    <h2 class="panel-name">Blackwater</h2>
    <p class="panel-text">Status: <span class="ok-word">Available</span></p>
    <p class="panel-text mb-0">Available Features:</p>
    <div class="feature-list d-grid">
      <button class="btn btn-brand" type="button">Baseline</button>
      <button class="btn btn-brand" type="button">Scenario</button>
      <button class="btn btn-brand" type="button">Monitor</button>
    </div>
    <hr class="panel-rule">
  </div>
  <div class="panel-foot"><button class="btn btn-brand" type="button">Contact Us</button></div>
</aside>

<script src="https://cdn.jsdelivr.net/npm/bootstrap@5.3.0/dist/js/bootstrap.bundle.min.js"></script>
<script>
let seed = 7;
const rnd = () => (seed = (seed * 16807) % 2147483647) / 2147483647;
const pairs = s => s.trim().split(/\s+/).map(p => p.split(',').map(Number));
const put = (id, d) => document.getElementById(id).setAttribute('d', d);

// Daily rainfall peaks as sample,level on a 3-per-unit raster (baseline 954)
const west = pairs(`233,802 248,700 257,560 269,790 279,935 292,490 302,730 308,816 321,838 330,864 338,870 345,942 353,912 364,903 376,552 383,726 389,762 402,585 411,697 418,575 431,636 439,787 447,755 455,845 466,665 475,887 484,935 491,800 505,655 516,716 527,678 543,665 560,688 574,756 591,707 600,909 611,601 617,762 630,784 641,942 652,954 660,950 669,790 678,565 688,775 697,918 707,733 717,595 722,797 733,682 739,650 748,930 757,733 762,694 769,810 780,906 788,896 797,765 808,938 815,838 823,810 831,954 839,803 846,944 855,918 862,490 872,903 880,694 887,742 894,652 902,935 912,588 926,730 942,800 955,758 961,647 966,704 971,797 980,780 988,778 996,607 1005,768 1012,658 1022,832 1030,845 1038,742 1051,658 1063,665 1074,950 1082,942 1090,909 1100,770 1108,952 1116,925 1128,751 1135,607 1148,791 1157,797 1170,694 1180,768 1190,938 1205,595 1219,610 1234,768 1240,909 1247,652 1257,578 1263,682 1274,738 1283,495 1290,785 1297,862 1312,700 1322,903`);
const east = pairs(`18,953 25,800 30,682 36,787 50,787 58,703 66,793 76,758 84,864 94,810 101,828 108,950 116,726 120,694 130,645 135,640 143,357 150,850 160,909 169,864 175,771 184,848 194,694 204,952 213,893 220,697 230,665 239,874 247,945 255,851 264,945 275,896 281,713 293,768 303,800 315,918 330,928 343,858 349,578 360,780 368,930 375,707 390,668 396,604 400,566 412,710 426,630 432,742 441,752 445,685 453,948 468,935 485,835 491,765 496,675 503,682 512,896 522,671 528,920 538,953 547,726 560,713 571,623 580,569 592,797 601,938 612,527 627,648 631,353 641,640 648,703 663,713 673,650 682,713 689,954 696,826 705,736 711,545 715,482 721,915 728,720 743,787 760,688 768,771 776,694 788,868 798,945 805,710 811,784 824,945 833,906 840,661 850,781 862,623 876,713 888,950 901,623 908,618 918,880 927,730 930,502 943,842 956,903 962,755 970,952 978,884 988,940 998,671 1002,890 1012,948 1023,787 1031,840 1048,862 1059,784 1068,918 1075,803 1090,620 1098,752 1110,308 1116,828 1123,697 1130,803 1139,742 1146,810 1157,572 1162,511 1167,820 1172,948 1178,655 1184,787 1191,556 1198,640 1204,655 1210,733 1216,867 1222,900 1230,930 1240,938 1250,890 1255,813 1262,874 1274,784 1282,832 1290,916 1298,948 1306,932 1316,942`);
const rain = west.concat(east.map(([x, y]) => [x + 1320, y]))
  .map(([x, y]) => [70 + (x - 231) / 3, Math.max(0, (954 - y) / 3)]);
let d = '';
rain.forEach(([x, h], i) => {
  if (h > 0) d += `M${(x - 1.4).toFixed(1)} 279V${(279 - h).toFixed(1)}h2.800V279z`;
  const nxt = rain[i + 1];
  if (nxt) for (let s = x + 1.5; s < nxt[0]; s += 1.5) {
    const f = Math.min(h, nxt[1]) * (.35 + .65 * rnd());
    if (f > .5) d += `M${(s - .8).toFixed(1)} 279v${(-f).toFixed(1)}h1.800V279z`;
  }
});
put('rain', d);

// Phosphorus envelope: sample, high, low
const env = pairs(`232,386,412 237,388,425 246,390,425 252,430,488 259,440,486 264,428,450 278,420,455 287,400,440 292,440,492 298,410,440 303,430,460 316,422,455 322,440,482 330,435,460 336,440,500 345,410,450 358,405,460 366,388,428 378,385,425 383,362,420 388,385,442 397,382,438 405,390,440 413,390,430 420,430,465 424,452,488 440,450,472 460,445,474 480,430,460 498,430,458 510,448,472 530,455,480 548,454,485 558,475,515 567,458,515 575,485,530 583,468,530 591,470,537 597,418,460 605,425,458 609,340,420 614,440,470 620,460,466 630,430,436 641,402,408 647,362,385 652,420,465 662,440,468 678,438,470 690,440,486 705,440,480 722,448,478 742,448,476 765,432,460 780,434,462 787,450,500 794,470,530 801,440,470 808,440,505 815,425,462 828,430,475 836,390,430 843,380,412 850,384,420 856,370,430 865,390,442 873,380,440 880,400,450 888,440,458 910,434,464 925,452,480 940,455,480 958,455,488 980,458,485 1005,455,485 1014,490,520 1021,510,552 1027,490,505 1038,458,470 1047,448,490 1053,450,542 1058,440,470 1064,410,445 1072,380,432 1080,380,418 1090,380,412 1100,385,430 1108,358,420 1114,410,440 1120,430,455 1134,448,470 1145,435,460 1152,462,490 1170,452,478 1190,455,482 1210,455,492 1225,455,485 1243,465,498 1254,485,518 1264,490,540 1270,465,480 1280,440,460 1288,420,468 1294,385,430 1299,372,420 1306,385,445 1315,388,448 1325,385,450 1331,374,440 1339,395,440 1348,440,462 1356,450,475 1368,428,470 1380,445,482 1395,458,496 1405,440,475 1420,440,462 1445,444,468 1463,424,450 1473,438,470 1479,470,540 1488,455,515 1495,440,480 1501,460,527 1507,430,460 1518,400,435 1524,380,420 1535,380,430`);
const toY = y => ((y - 145) / 3 + 18.5).toFixed(1);
const spread = 2.904;
let line = [];
for (let rep = 0; rep < 2; rep++) env.forEach(([x, hi, lo], i) => {
  const n = env[i + 1]; if (!n) return;
  for (let s = x; s < n[0]; s += 3) {
    const t = (s - x) / (n[0] - x), H = hi + (n[1] - hi) * t, L = lo + (n[2] - lo) * t;
    const px = 66 + (s - 232) / spread + rep * 448.7;
    if (px > 864) return;
    const up = line.length % 2;
    const y = s === x ? (up ? hi : lo) : (up ? H + (L - H) * .4 * rnd() : L - (L - H) * .4 * rnd());
    line.push(px.toFixed(1) + ' ' + toY(y));
    if (s === x) line.push((px + .4).toFixed(1) + ' ' + toY(up ? lo : hi));
  }
});
put('srp', 'M' + line.join('L'));

let flow = 'M60 171';
for (let x = 60; x <= 862; x += 1) flow += `L${x} ${(171 - 2 - 3 * rnd() - (rnd() > .92 ? 4 * rnd() : 0)).toFixed(1)}`;
put('flow', flow + 'L862 171z');

// Seasonal water temperature: offset, degrees
const deg = pairs(`0,12 3,12 5,7 12,8 18,6 23,2 28,7 35,10 43,9 48,15 54,19 60,18 67,17 72,16 78,14 83,10 88,6 93,4 98,6 104,5 109,1 114,6 120,12 126,14 133,18 139,21 141,22 146,19 151,16 157,15 162,10 168,9 174,7 181,3 187,8 194,9 200,8 207,14 213,17 219,20 224,19 229,17 235,15 240,11 245,6 252,7 260,7 268,7 274,7 279,11 285,16 292,18 299,18 303,22 308,17 313,15 318,12 324,10 330,6 335,2 340,5 345,3 350,7 357,6 362,9 367,16 372,18 380,18 386,18 392,16 397,13 402,10 407,4 413,8 418,4 424,8 430,7 436,9 443,15 455,18 465,21 475,16 485,9 500,5 515,7 530,14 545,20 560,15 575,8 590,4 605,8 620,15 635,21 650,15 665,8 680,4 700,10 720,20 740,14 760,6 775,5`);
const tops = {54:20.6,141:23.5,220:23.3,227:21,293:20.3,303:24,378:19.8,389:19};
let temp = 'M60 171';
deg.forEach(([x, v], i) => {
  const n = deg[i + 1]; if (!n) return;
  for (let s = x; s < n[0]; s += 1) {
    let t = v + (n[1] - v) * (s - x) / (n[0] - x) + (rnd() - .5) * 5;
    if (tops[s]) t = tops[s];
    temp += `L${(60 + s * 3 / spread).toFixed(1)} ${(171 - Math.max(.5, t) * 5.1).toFixed(1)}`;
  }
});
put('temp', temp + 'L862 171z');

// Watersheds and shorelines get a fine natural roughness
document.querySelectorAll('.ridge').forEach(p => {
  const len = p.getTotalLength(), pts = [];
  for (let s = 0; s < len; s += 7) {
    const q = p.getPointAtLength(s), k = s ? 8 : 0;
    pts.push((q.x + (rnd() - .5) * k).toFixed(1) + ' ' + (q.y + (rnd() - .5) * k).toFixed(1));
  }
  const e = p.getPointAtLength(len);
  p.setAttribute('d', 'M' + pts.join('L') + `L${e.x} ${e.y}`);
});
</script>
</body>
</html>
